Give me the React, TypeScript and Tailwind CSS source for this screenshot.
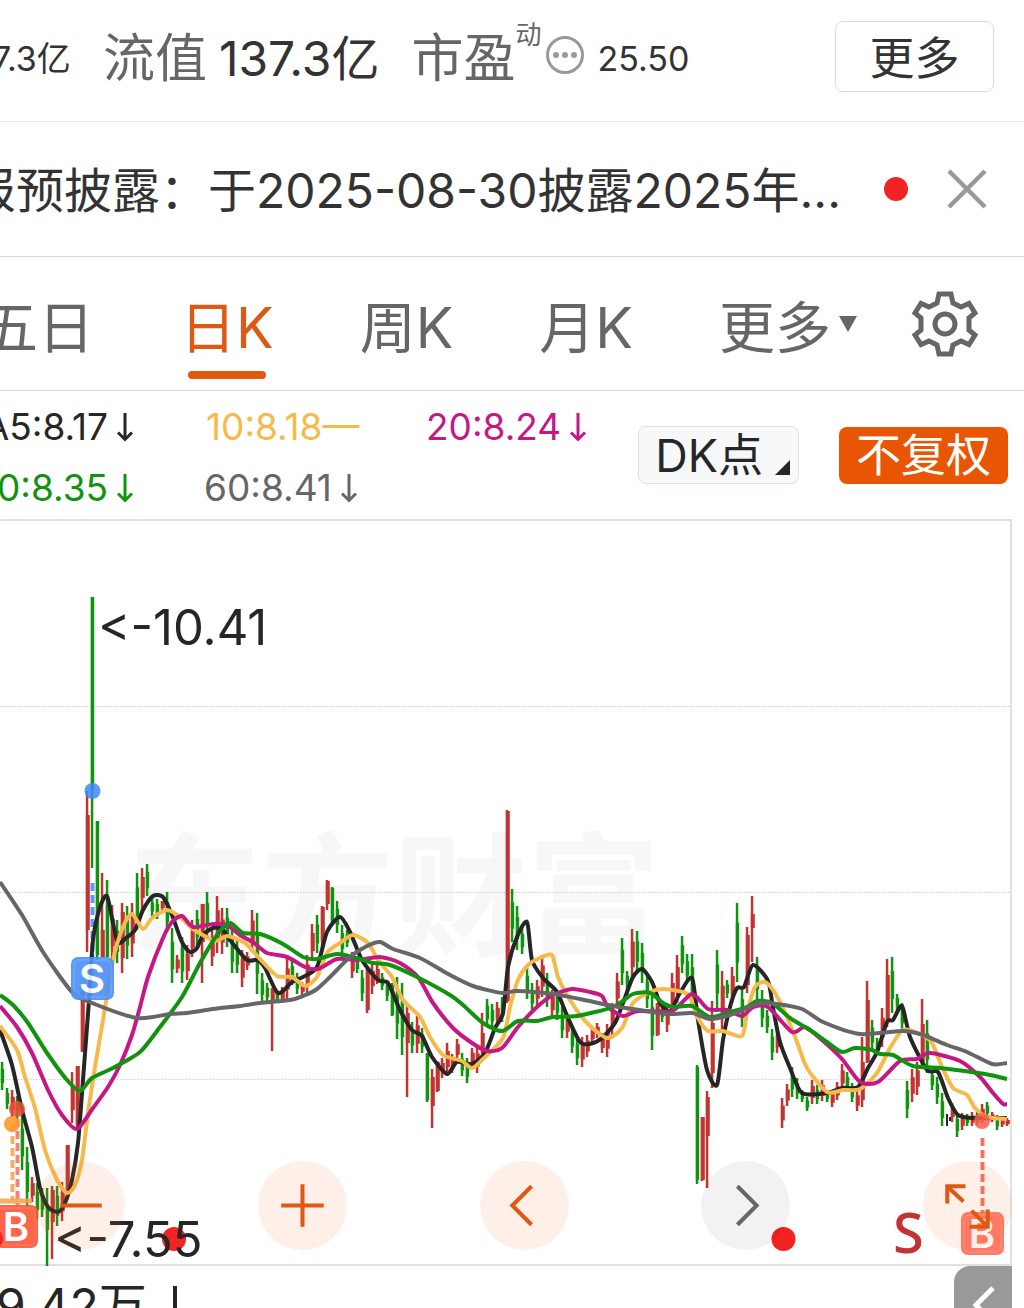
import { useState } from 'react';
import clsx from 'clsx';

type Candle = [x: number, high: number, low: number, up: 0 | 1, bodyTop?: number, bodyBottom?: number];
type Point = [number, number];

const UP = '#c23431';
const DOWN = '#109410';

// x, high, low, up, and the body where it differs from the usual middle part
const CANDLES: Candle[] = [
  [1, 1062, 1090, 0], [6, 1088, 1109, 0], [11, 1090, 1117, 1], [16, 1096, 1120, 0], [21, 1115, 1170, 0],
  [26, 1147, 1207, 0], [31, 1177, 1202, 1], [36, 1183, 1219, 0], [41, 1188, 1217, 0], [46, 1188, 1266, 0, 1207, 1230],
  [51, 1186, 1259, 1, 1190, 1222], [56, 1186, 1226, 0], [61, 1182, 1221, 1], [66, 1145, 1197, 1, 1145, 1192],
  [71, 1072, 1123, 1], [76, 1066, 1127, 1, 1066, 1125], [81, 990, 1052, 1, 990, 1051], [86, 791, 952, 1, 815, 930],
  [91, 597, 868, 0, 597, 790], [96, 821, 960, 0, 821, 955], [101, 873, 957, 1, 930, 957], [106, 880, 957, 0, 905, 957],
  [111, 905, 960, 1], [116, 920, 963, 0], [121, 903, 973, 1, 912, 958], [126, 906, 959, 0], [131, 903, 957, 1],
  [136, 873, 930, 0], [141, 868, 912, 1, 877, 898], [146, 864, 896, 0], [151, 898, 916, 0], [156, 899, 919, 0],
  [161, 901, 910, 1, 901, 908], [166, 892, 932, 0], [171, 928, 983, 0], [176, 955, 973, 1], [181, 937, 983, 0],
  [186, 945, 980, 1], [191, 920, 957, 1], [196, 910, 946, 0], [201, 904, 983, 1, 904, 942], [206, 892, 937, 0],
  [211, 928, 966, 1], [216, 896, 953, 1], [221, 908, 954, 1], [226, 908, 947, 0], [231, 928, 973, 0],
  [236, 940, 973, 0], [241, 950, 987, 1], [246, 952, 970, 1], [251, 910, 952, 1], [256, 913, 994, 0],
  [261, 973, 1002, 0], [266, 983, 1002, 0], [271, 988, 1051, 1, 988, 1000], [276, 990, 1003, 0], [281, 987, 1003, 1],
  [286, 958, 1000, 1], [291, 960, 985, 0], [296, 973, 994, 0], [301, 982, 995, 1], [306, 955, 993, 1],
  [311, 924, 960, 1], [316, 915, 953, 0], [321, 906, 948, 1, 907, 940], [326, 880, 910, 1, 881, 904],
  [331, 887, 923, 0, 888, 920], [336, 901, 933, 0], [341, 925, 957, 0], [346, 930, 947, 0], [351, 952, 978, 1],
  [356, 957, 973, 0], [361, 970, 1001, 0], [366, 967, 1013, 1, 968, 1010], [371, 963, 994, 1], [376, 964, 984, 1],
  [381, 973, 990, 0], [386, 980, 1001, 0], [391, 983, 1016, 0, 985, 1015], [396, 977, 1039, 0], [401, 983, 1055, 0],
  [406, 1006, 1097, 1, 1013, 1043], [411, 1022, 1053, 0], [416, 1016, 1053, 1], [421, 1028, 1053, 0],
  [426, 1053, 1102, 0, 1054, 1100], [431, 1069, 1128, 1, 1077, 1106], [436, 1061, 1092, 1, 1062, 1091],
  [441, 1058, 1078, 1], [446, 1043, 1075, 1], [451, 1054, 1073, 1], [456, 1039, 1060, 1], [461, 1053, 1076, 0],
  [466, 1058, 1083, 0], [471, 1048, 1067, 1], [476, 1047, 1073, 1], [481, 1013, 1057, 1, 1033, 1050],
  [486, 999, 1026, 0], [491, 1004, 1027, 0], [496, 1002, 1025, 1], [501, 997, 1022, 0], [506, 810, 1003, 1, 811, 1001],
  [511, 889, 942, 0], [516, 906, 950, 0], [521, 927, 954, 0], [526, 968, 999, 0], [531, 983, 1010, 0],
  [536, 980, 1005, 1], [541, 955, 997, 1], [546, 973, 1007, 0], [551, 990, 1017, 1], [556, 990, 1020, 0],
  [561, 1007, 1038, 0], [566, 1013, 1038, 1], [571, 1027, 1053, 0], [576, 1037, 1065, 0], [581, 1037, 1067, 1],
  [586, 1035, 1057, 1], [591, 1027, 1043, 1], [596, 1023, 1038, 1], [601, 1033, 1053, 1], [606, 1024, 1057, 1],
  [611, 1003, 1035, 1], [616, 973, 1007, 1], [621, 938, 985, 0], [626, 971, 990, 0], [631, 929, 980, 1],
  [636, 931, 972, 0], [641, 943, 983, 0], [646, 973, 1008, 0], [651, 993, 1050, 0], [656, 1003, 1036, 1, 1004, 1035],
  [661, 1003, 1022, 0], [666, 1003, 1032, 1], [671, 973, 1013, 1], [676, 955, 1003, 1], [681, 936, 973, 0],
  [686, 954, 983, 0], [691, 954, 1007, 0], [696, 1065, 1184, 0, 1067, 1180], [701, 1117, 1181, 1, 1117, 1180],
  [706, 1091, 1188, 1, 1097, 1136], [711, 1001, 1088, 1, 1023, 1073], [716, 950, 1008, 0], [721, 971, 1030, 1],
  [726, 980, 998, 0], [731, 967, 1003, 1], [736, 903, 982, 0], [741, 990, 1027, 0], [746, 927, 993, 1, 935, 985],
  [751, 896, 962, 1, 914, 928], [756, 957, 1000, 0], [761, 990, 1027, 0], [766, 1010, 1033, 0], [771, 1029, 1060, 0],
  [776, 1030, 1053, 1], [781, 1098, 1128, 1], [786, 1084, 1106, 1], [791, 1067, 1097, 0], [796, 1078, 1099, 0],
  [801, 1090, 1102, 0], [806, 1097, 1111, 0], [811, 1080, 1104, 1], [816, 1085, 1104, 0], [821, 1080, 1101, 1],
  [826, 1090, 1102, 0], [831, 1090, 1107, 1], [836, 1082, 1100, 1], [841, 1064, 1090, 1], [846, 1072, 1091, 0],
  [851, 1083, 1102, 0], [856, 1090, 1111, 1], [861, 1037, 1107, 1, 1062, 1100], [866, 981, 1063, 1, 1000, 1062],
  [871, 1020, 1050, 0], [876, 1038, 1053, 0], [881, 1008, 1047, 1], [886, 959, 1027, 1, 975, 1022],
  [891, 957, 1013, 0], [896, 994, 1010, 0], [901, 1003, 1030, 0], [906, 1081, 1118, 0], [911, 1069, 1102, 1],
  [916, 1062, 1095, 1], [921, 999, 1065, 1, 1024, 1062], [926, 1020, 1073, 0], [931, 1070, 1090, 0],
  [936, 1077, 1104, 0], [941, 1093, 1126, 0], [951, 1103, 1122, 1], [956, 1113, 1137, 0],
  [961, 1113, 1130, 1], [966, 1114, 1126, 0], [971, 1112, 1126, 1], [976, 1112, 1125, 0], [981, 1104, 1123, 1],
  [986, 1102, 1117, 0], [991, 1112, 1122, 1], [996, 1115, 1130, 0], [1001, 1117, 1127, 1], [1006, 1118, 1126, 1],
];

const MA_LINES: { color: string; points: Point[] }[] = [
  {
    color: '#262626',
    points: [
      [0, 1030], [12, 1065], [22, 1110], [32, 1147], [40, 1188], [48, 1207], [58, 1212], [65, 1203], [72, 1180], [78, 1143],
      [82, 1093], [87, 1027], [89, 1000], [93, 940], [100, 907], [107, 896], [113, 923], [118, 943], [126, 938], [135, 930],
      [143, 910], [153, 896], [163, 897], [172, 915], [182, 942], [190, 952], [197, 948], [203, 935], [213, 928], [222, 929],
      [230, 940], [247, 960], [257, 960], [265, 968], [278, 993], [292, 982], [303, 977], [317, 967], [327, 932], [340, 917],
      [350, 932], [362, 960], [378, 980], [388, 983], [400, 1010], [412, 1030], [422, 1036], [432, 1057], [447, 1074],
      [457, 1062], [472, 1064], [485, 1053], [495, 1028], [503, 1013], [508, 967], [517, 937], [527, 922], [532, 960],
      [543, 978], [557, 992], [568, 1018], [580, 1042], [590, 1044], [602, 1038], [615, 1023], [623, 1003], [633, 977],
      [642, 969], [652, 982], [660, 1003], [670, 1011], [680, 993], [692, 978], [698, 1020], [707, 1070], [717, 1085],
      [723, 1040], [730, 1007], [737, 988], [744, 987], [753, 965], [768, 981], [773, 1008], [780, 1042], [790, 1068],
      [802, 1093], [827, 1093], [842, 1088], [858, 1087], [868, 1068], [877, 1052], [887, 1022], [893, 1020], [902, 1006],
      [910, 1037], [927, 1070], [938, 1072], [948, 1098], [958, 1115], [973, 1118], [1007, 1118],
    ],
  },
  {
    color: '#f5ba4a',
    points: [
      [0, 1026], [17, 1050], [25, 1077], [35, 1108], [45, 1150], [57, 1180], [67, 1193], [75, 1185], [82, 1160], [88, 1113],
      [95, 1067], [103, 1020], [113, 960], [123, 927], [132, 914], [143, 929], [152, 918], [167, 910], [180, 917],
      [193, 929], [215, 941], [227, 936], [245, 943], [260, 959], [277, 976], [292, 977], [305, 986], [317, 977], [327, 953],
      [340, 943], [353, 935], [368, 943], [378, 960], [392, 977], [403, 1000], [420, 1017], [430, 1037], [443, 1055],
      [462, 1061], [472, 1068], [483, 1059], [503, 1038], [510, 1007], [518, 980], [528, 965], [540, 958], [552, 955],
      [558, 977], [570, 1000], [587, 1023], [607, 1038], [622, 1028], [633, 1003], [650, 992], [663, 989], [683, 992],
      [690, 997], [698, 1018], [708, 1031], [723, 1031], [742, 1036], [747, 1012], [755, 987], [765, 982], [775, 993],
      [787, 1017], [797, 1042], [807, 1068], [827, 1092], [843, 1090], [860, 1089], [877, 1073], [890, 1048], [903, 1030],
      [920, 1034], [932, 1043], [942, 1067], [953, 1088], [967, 1095], [975, 1108], [987, 1117], [1007, 1119],
    ],
  },
  {
    color: '#c51886',
    points: [
      [0, 1006], [17, 1027], [32, 1053], [48, 1090], [62, 1115], [77, 1129], [93, 1108], [108, 1087], [120, 1065],
      [132, 1035], [140, 1007], [148, 977], [163, 938], [172, 922], [182, 916], [193, 927], [213, 924], [227, 925],
      [240, 935], [254, 943], [267, 953], [287, 957], [305, 967], [318, 969], [337, 959], [357, 960], [380, 957],
      [400, 963], [418, 977], [433, 1003], [453, 1028], [472, 1043], [487, 1051], [502, 1048], [518, 1027], [537, 1007],
      [553, 995], [572, 989], [590, 992], [602, 996], [608, 1007], [623, 1016], [638, 1011], [672, 1011], [692, 994],
      [708, 1009], [727, 1010], [742, 1016], [753, 1007], [768, 1007], [792, 1032], [805, 1027], [822, 1040], [842, 1059],
      [860, 1082], [878, 1082], [900, 1061], [917, 1059], [930, 1053], [960, 1061], [980, 1077], [993, 1093],
      [1003, 1104], [1007, 1104],
    ],
  },
  {
    color: '#109410',
    points: [
      [0, 995], [13, 1005], [28, 1023], [47, 1053], [67, 1080], [80, 1091], [92, 1078], [113, 1068], [140, 1052],
      [160, 1027], [182, 997], [200, 963], [217, 935], [230, 923], [243, 933], [260, 934], [283, 944], [303, 957],
      [317, 959], [337, 954], [357, 958], [373, 963], [390, 965], [417, 977], [450, 995], [463, 1005], [483, 1023],
      [502, 1031], [518, 1021], [537, 1021], [553, 1017], [577, 1016], [613, 1007], [633, 994], [650, 993], [663, 1003],
      [673, 1007], [692, 1006], [710, 1017], [730, 1012], [747, 1007], [757, 1001], [772, 1003], [790, 1018],
      [810, 1030], [827, 1042], [842, 1052], [855, 1048], [872, 1050], [880, 1054], [893, 1055], [913, 1066],
      [940, 1068], [985, 1074], [1007, 1079],
    ],
  },
  {
    color: '#666666',
    points: [
      [0, 882], [22, 915], [43, 952], [72, 992], [92, 1003], [137, 1018], [170, 1014], [187, 1013], [213, 1009],
      [240, 1006], [260, 1003], [290, 1000], [303, 996], [317, 989], [330, 977], [350, 957], [367, 946], [380, 942],
      [393, 949], [420, 958], [450, 975], [473, 986], [502, 993], [517, 991], [553, 994], [580, 999], [613, 1006],
      [633, 1009], [668, 1014], [692, 1013], [710, 1019], [730, 1015], [747, 1008], [760, 1003], [777, 1004],
      [802, 1009], [823, 1022], [860, 1034], [903, 1031], [923, 1035], [947, 1045], [967, 1052], [992, 1064], [1007, 1063],
    ],
  },
];

const TABS = ['五日', '日K', '周K', '月K'];

function smoothPath(pts: Point[]) {
  let d = `M${pts[0][0]} ${pts[0][1]}`;
  for (let i = 0; i < pts.length - 1; i++) {
    const p0 = pts[i - 1] ?? pts[i];
    const p1 = pts[i];
    const p2 = pts[i + 1];
    const p3 = pts[i + 2] ?? p2;
    d += `C${p1[0] + (p2[0] - p0[0]) / 8} ${p1[1] + (p2[1] - p0[1]) / 8} ${p2[0] - (p3[0] - p1[0]) / 8} ${
      p2[1] - (p3[1] - p1[1]) / 8
    } ${p2[0]} ${p2[1]}`;
  }
  return d;
}

function CandleBar({ candle }: { candle: Candle }) {
  const [x, high, low, up, top, bottom] = candle;
  const range = low - high;
  const bodyTop = top ?? high + range * 0.25;
  const bodyBottom = bottom ?? low - range * 0.25;
  return (
    <g fill={up ? UP : DOWN}>
      <rect x={x - 0.2} y={high} width={2.5} height={range} />
      <rect x={x - 0.2} y={bodyTop} width={up ? 4 : 3.4} height={bodyBottom - bodyTop} />
    </g>
  );
}

function Marker({ x, y, letter, color, opacity = 0.9 }: { x: number; y: number; letter: string; color: string; opacity?: number }) {
  return (
    <g opacity={opacity}>
      <rect x={x} y={y} width="43" height="43" rx="7" fill={color} />
      <rect x={x + 3} y={y + 3} width="37" height="37" rx="5" fill="none" stroke="#fff" strokeOpacity="0.1" strokeWidth="2" />
      <text x={x + 21} y={y + 36} textAnchor="middle" fill="#fff" className="font-['Inter'] text-[40px] font-semibold">
        {letter}
      </text>
    </g>
  );
}

function KLineChart() {
  return (
    <svg viewBox="0 519 1012 747" className="block h-auto w-full" role="img" aria-label="日K线图">
      <text x="128" y="945" fill="#f7f7f7" className="font-['Noto_Sans_CJK_SC',sans-serif] text-[133px] font-bold">
        东方财富
      </text>
      <path d="M0 520H1011V1265H0" fill="none" stroke="#e0e0e0" strokeWidth="2" />
      <path d="M0 706.5H1011M0 892.5H1011M0 1079.5H1011" stroke="#cfcfcf" strokeDasharray="1.5 1.5" />

      {CANDLES.map((c) => (
        <CandleBar key={c[0]} candle={c} />
      ))}
      <path d="M947 1114v12M950 1117v4" stroke="#262626" strokeWidth="2" />

      <path d="M92.5 883V957" stroke="#5a9bf8" strokeWidth="4" strokeDasharray="8 4" />
      {MA_LINES.map((line) => (
        <path key={line.color} d={smoothPath(line.points)} fill="none" stroke={line.color} strokeWidth="4" strokeLinejoin="round" />
      ))}

      <circle cx="92.5" cy="791" r="8" fill="#3d8bf7" fillOpacity="0.85" />
      <Marker x={71} y={957} letter="S" color="#4a90f8" />

      <path d="M12.5 1124V1200" stroke="#f5a04a" strokeOpacity="0.85" strokeWidth="4" strokeDasharray="8 4" />
      <path d="M17.5 1119V1205" stroke="#f0705f" strokeOpacity="0.85" strokeWidth="4" strokeDasharray="8 4" />
      <circle cx="17" cy="1109" r="8" fill="#ee4d38" fillOpacity="0.85" />
      <circle cx="12" cy="1124" r="8" fill="#fb9a2b" fillOpacity="0.9" />
      <path d="M0 1201H32" stroke="#f5a04a" strokeWidth="5" strokeOpacity="0.85" />
      <Marker x={-5} y={1205} letter="B" color="#ff5535" />
      <circle cx="-7" cy="1239" r="10" fill="#f22323" />

      <circle cx="982" cy="1121" r="8" fill="#ff5a45" fillOpacity="0.85" />
      <path d="M982.5 1138V1212" stroke="#f9705f" strokeWidth="4" strokeDasharray="8 4" />
      <Marker x={961} y={1212} letter="B" color="#ff5a45" opacity={0.8} />

      <circle cx="174" cy="1239" r="12" fill="#f22323" />
      <circle cx="783.5" cy="1239" r="12" fill="#f22323" />
      <g className="font-['Inter','Noto_Sans_CJK_SC',sans-serif]" fill="#262626">
        <text x="98" y="645" className="text-[49px]">
          &lt;-10.41
        </text>
        <text x="54" y="1257" className="text-[49px]">
          &lt;-7.55
        </text>
        <text x="893" y="1253" fill={UP} className="font-['Noto_Sans'] text-[56px] font-medium">
          S
        </text>
      </g>
    </svg>
  );
}

function DownArrow() {
  return (
    <svg viewBox="0 0 18 30" className="ml-2 h-[30px] w-[18px] shrink-0" fill="none" stroke="currentColor" strokeWidth="3" aria-label="下降">
      <path d="M9 1V28M2 20.5l7 7 7-7" />
    </svg>
  );
}

function Average({ children, className, down }: { children: string; className: string; down?: boolean }) {
  return (
    <span className={clsx('flex items-center whitespace-nowrap text-[37px] leading-[61px]', className)}>
      {children}
      {down && <DownArrow />}
    </span>
  );
}

function ChartControls() {
  const base = 'flex size-[89px] items-center justify-center rounded-full';
  const orange = 'bg-[#f26a1b]/10 text-[#dc5a14]';
  const icon = { viewBox: '0 0 88 88', fill: 'none', stroke: 'currentColor', strokeWidth: 4, className: 'size-full' };
  return (
    <div className="absolute right-0 bottom-4 left-9 flex justify-between">
      <button type="button" aria-label="缩小" className={clsx(base, orange)}>
        <svg {...icon}><path d="M24 44H65" /></svg>
      </button>
      <button type="button" aria-label="放大" className={clsx(base, orange)}>
        <svg {...icon}><path d="M23 44H65M44 23V65" /></svg>
      </button>
      <button type="button" aria-label="左移" className={clsx(base, orange)}>
        <svg {...icon}><path d="M51 25L32 44L51 63" /></svg>
      </button>
      <button type="button" aria-label="右移" className={clsx(base, 'bg-black/5 text-[#666]')}>
        <svg {...icon}><path d="M36 25L55 44L36 63" /></svg>
      </button>
      <button type="button" aria-label="全屏" className={clsx(base, orange)}>
        <svg {...icon}><path d="M24 42V25H42M26 27L40 40M64 48V65H46M48 49L62 63" /></svg>
      </button>
    </div>
  );
}

export default function App() {
  const [tab, setTab] = useState('日K');
  const [noticeOpen, setNoticeOpen] = useState(true);

  return (
    <main className="w-full overflow-hidden bg-white font-['Inter','Noto_Sans_CJK_SC',sans-serif] text-[#333]">
      <header className="flex h-[122px] items-center border-b border-[#ebebeb] pr-[30px] pb-2">
        <div className="-ml-2 flex flex-1 items-center pt-1 leading-[60px] whitespace-nowrap">
          <span className="text-[34px]">7.3亿</span>
          <span className="ml-8 text-[52px] text-[#666]">流值</span>
          <span className="ml-3 text-[48px]">137.3亿</span>
          <span className="ml-8 text-[52px] text-[#666]">市盈</span>
          <sup className="top-0 mb-12 text-[26px] leading-none text-[#666]">动</sup>
          <svg viewBox="0 0 40 40" className="mb-2 ml-1 size-10" aria-hidden>
            <circle cx="20" cy="20" r="17.5" fill="none" stroke="#999" strokeWidth="3" />
            <g fill="#999">
              <circle cx="11" cy="20" r="3" />
              <circle cx="20" cy="20" r="3" />
              <circle cx="29" cy="20" r="3" />
            </g>
          </svg>
          <span className="ml-3 text-[34px]">25.50</span>
        </div>
        <button type="button" className="h-[71px] w-[159px] rounded-lg border border-[#dcdcdc] pt-1 text-[45px] leading-none">
          更多
        </button>
      </header>

      {noticeOpen && (
        <section className="flex h-[135px] items-center border-b border-[#d8d8d8] pr-9">
          <p className="-ml-8 flex-1 pt-1 text-[48px] whitespace-nowrap">报预披露：于2025-08-30披露2025年...</p>
          <span className="size-6 rounded-full bg-[#f22323]" />
          <button type="button" aria-label="关闭" className="ml-[38px]" onClick={() => setNoticeOpen(false)}>
            <svg viewBox="0 0 42 42" className="size-[42px]" stroke="#999" strokeWidth="4.5">
              <path d="M3 3L39 39M39 3L3 39" />
            </svg>
          </button>
        </section>
      )}

      <nav className="flex h-[134px] items-stretch border-b border-[#d8d8d8] pr-[45px] text-[56px] text-[#666]">
        <div className="-ml-[18px] flex flex-1 gap-[86px] whitespace-nowrap">
          {TABS.map((t) => (
            <button
              key={t}
              type="button"
              onClick={() => setTab(t)}
              className={clsx('relative pt-2', t === tab && 'text-[#dc5a14]')}
            >
              {t}
              {t === tab && <span className="absolute inset-x-2 bottom-[11px] h-2 rounded-full bg-[#e05a0c]" />}
            </button>
          ))}
          <button type="button" className="flex items-center gap-2 pt-2">
            更多
            <svg viewBox="0 0 18 16" className="mb-2 h-4 w-[18px]" fill="currentColor" aria-hidden>
              <path d="M0 0H18L9 16Z" />
            </svg>
          </button>
        </div>
        <button type="button" aria-label="设置">
          <svg viewBox="0 0 68 68" className="size-[68px]" fill="none" stroke="currentColor" strokeWidth="5">
            <path d="M28 4H40L42 13L50 17L58 13.5L64 23L58 28V40L64 45L58 54.5L50 51L42 55L40 64H28L26 55L18 51L10 54.5L4 45L10 40V28L4 23L10 13.5L18 17L26 13Z" />
            <circle cx="34" cy="34" r="10" />
          </svg>
        </button>
      </nav>

      <section className="flex h-32 items-center pr-4">
        <div className="grid flex-1 grid-cols-[134px_222px_1fr] pt-1">
          <Average className="justify-end text-[#262626]" down>MA5:8.17</Average>
          <Average className="pl-[72px] text-[#f5ba4a]">10:8.18—</Average>
          <Average className="pl-[70px] text-[#c51886]" down>20:8.24</Average>
          <Average className="justify-end text-[#109410]" down>30:8.35</Average>
          <Average className="pl-[70px] text-[#666]" down>60:8.41</Average>
        </div>
        <button
          type="button"
          className="flex h-[58px] items-center rounded-lg border border-[#dde0e4] bg-[#f6f8fa] pr-2 pl-4 text-[45px] leading-none text-[#262626]"
        >
          DK点
          <svg viewBox="0 0 15 15" className="mt-6 ml-3 size-[15px]" fill="currentColor" aria-hidden>
            <path d="M15 0V15H0Z" />
          </svg>
        </button>
        <button type="button" className="ml-10 h-[57px] w-[169px] rounded-lg bg-[#e85604] text-[45px] leading-none text-white">
          不复权
        </button>
      </section>

      <section className="relative mr-3">
        <KLineChart />
        <ChartControls />
      </section>

      <footer className="flex h-[42px] items-start justify-between overflow-hidden pr-3">
        <p className="-ml-1 flex items-center pt-3 text-[48px] leading-[56px] text-[#262626]">
          9.42万
          <svg viewBox="0 0 24 40" className="ml-4 h-10 w-6" fill="none" stroke="currentColor" strokeWidth="4" aria-label="下降">
            <path d="M12 0V38M3 28l9 9 9-9" />
          </svg>
        </p>
        <button type="button" aria-label="展开" className="h-[60px] w-[58px] shrink-0 rounded-l-2xl bg-[#999] text-white">
          <svg viewBox="0 0 58 60" fill="none" stroke="currentColor" strokeWidth="5">
            <path d="M39 22L22 39L39 56" />
          </svg>
        </button>
      </footer>
    </main>
  );
}
